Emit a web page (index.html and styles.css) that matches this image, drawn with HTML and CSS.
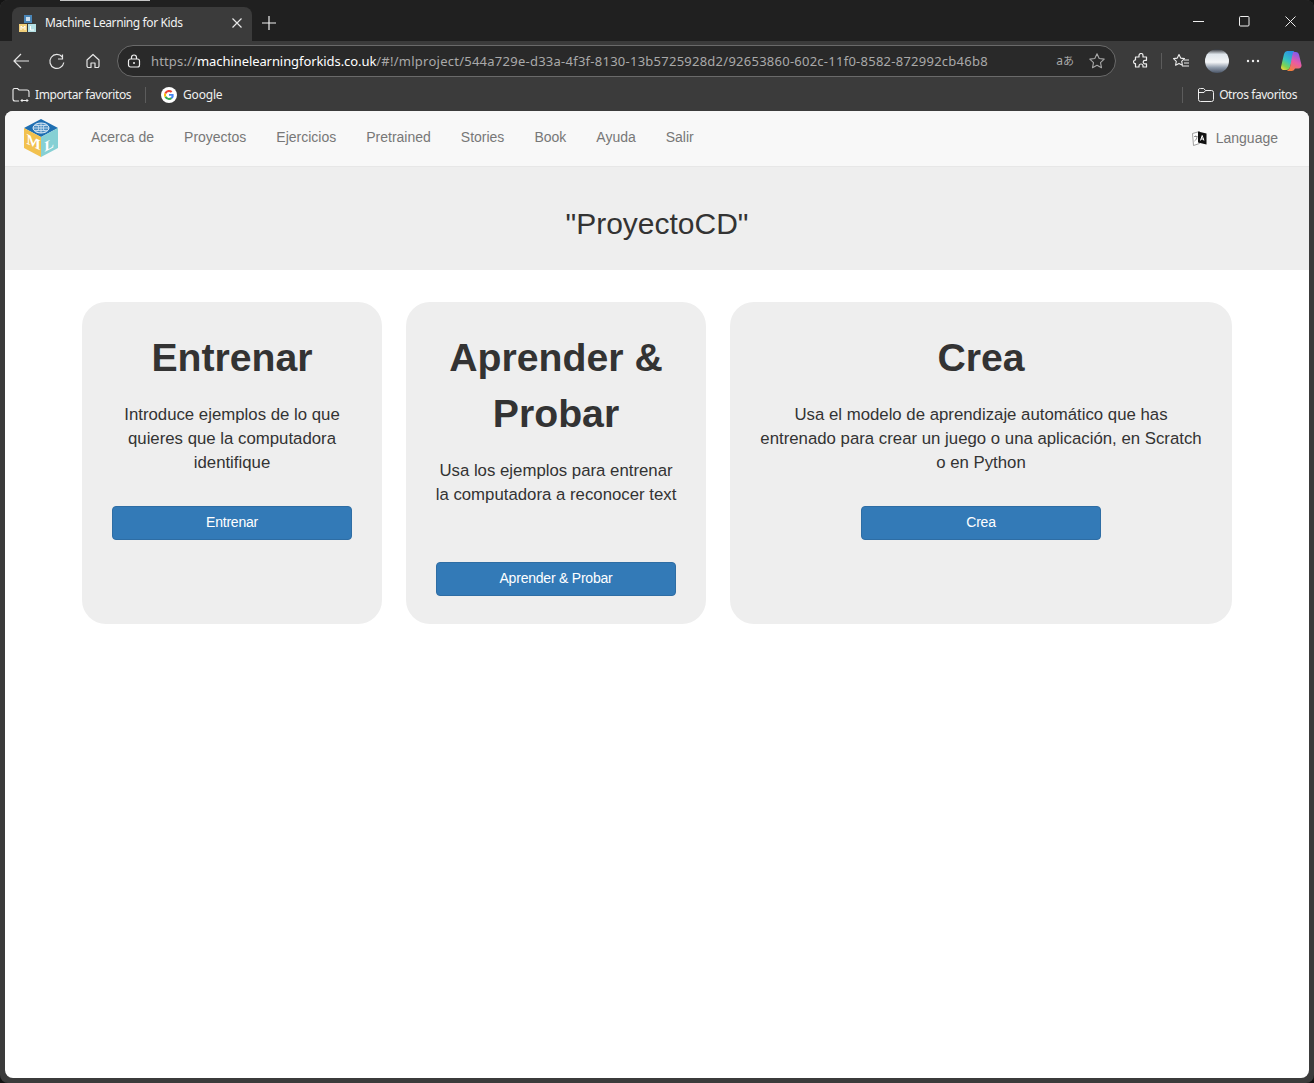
FILE: index.html
```html
<!DOCTYPE html>
<html lang="en">
<head>
    <meta charset="UTF-8">
    <meta name="viewport" content="width=device-width, initial-scale=1.0">
    <title>Machine Learning for Kids</title>
    <link rel="stylesheet" href="styles.css">
</head>
<body>
<div class="window">
    <div class="tabstrip">
        <div class="tab">
            <svg class="favicon" width="17" height="17" viewBox="0 0 17 17">
                <rect x="5" y="0" width="8" height="8" fill="#4a86b8"/>
                <rect x="7" y="2" width="4" height="4" fill="#cfe0ee"/>
                <rect x="0" y="9" width="8" height="8" fill="#f1cf7a"/>
                <rect x="9" y="9" width="8" height="8" fill="#b5e0e4"/>
                <path d="M2 15v-4l2 2.500L6 11v4" fill="none" stroke="#fff" stroke-width="1"/>
                <path d="M11.500 11v4H15" fill="none" stroke="#fff" stroke-width="1"/>
            </svg>
            <span class="tab-title">Machine Learning for Kids</span>
            <svg class="tab-close" width="10" height="10" viewBox="0 0 10 10"><path d="M.5.5l9 9M9.500.5l-9 9" stroke="#e8e8e8" stroke-width="1.200"/></svg>
        </div>
        <svg class="new-tab" width="14" height="14" viewBox="0 0 14 14"><path d="M7 0v14M0 7h14" stroke="#f0f0f0" stroke-width="1.200"/></svg>
        <div class="win-controls">
            <svg width="11" height="11" viewBox="0 0 11 11"><path d="M0 5.500h11" stroke="#eee"/></svg>
            <svg width="11" height="11" viewBox="0 0 11 11"><rect x=".5" y=".5" width="9.500" height="9.500" rx="1" fill="none" stroke="#eee"/></svg>
            <svg width="11" height="11" viewBox="0 0 11 11"><path d="M.5.500l10 10M10.500.5l-10 10" stroke="#eee"/></svg>
        </div>
    </div>

    <div class="toolbar">
        <svg class="tool" width="18" height="18" viewBox="0 0 18 18"><path d="M17 9H2M9 2L2 9l7 7" fill="none" stroke="#e6e6e6" stroke-width="1.200"/></svg>
        <svg class="tool" width="18" height="18" viewBox="0 0 18 18"><path d="M14.500 2.500v4.500H10M15.800 10.500A7 7 0 1 1 14.300 5" fill="none" stroke="#e6e6e6" stroke-width="1.200"/></svg>
        <svg class="tool" width="18" height="18" viewBox="0 0 18 18"><path d="M3 8l6-5.500L15 8v6a1.500 1.500 0 0 1-1.500 1.500H11V11H7v4.500H4.500A1.500 1.500 0 0 1 3 14z" fill="none" stroke="#e6e6e6" stroke-width="1.200" stroke-linejoin="round"/></svg>
        <div class="address">
            <svg class="lock" width="14" height="14" viewBox="0 0 14 14"><rect x="1.500" y="5" width="11" height="8" rx="2" fill="none" stroke="#eee" stroke-width="1.200"/><path d="M4.500 5V3.500a2.500 2.500 0 0 1 5 0V5" fill="none" stroke="#eee" stroke-width="1.200"/><circle cx="7" cy="9" r="1" fill="#eee"/></svg>
            <span class="url"><span class="url-scheme">https://</span><span class="url-host">machinelearningforkids.co.uk</span><span class="url-path">/#!/mlproject/544a729e-d33a-4f3f-8130-13b5725928d2/92653860-602c-11f0-8582-872992cb46b8</span></span>
            <span class="read-aloud">a<span class="read-kana">あ</span></span>
            <svg width="18" height="18" viewBox="0 0 18 18"><path d="M9 1.800l2.200 4.700 5 .6-3.700 3.500 1 5.100L9 13.200l-4.500 2.500 1-5.100L1.800 7.100l5-.6z" fill="none" stroke="#a8a8a8" stroke-width="1.100" stroke-linejoin="round"/></svg>
        </div>
        <svg class="tool-ext" width="16" height="16" viewBox="0 0 16 16"><path d="M6 2.500a2 2 0 0 1 4 0V4h3.500v3.300H12a1.800 1.800 0 0 0 0 3.600h1.500V14H10v-1a2 2 0 0 0-4 0v1H2.500v-3.300H1.800a2 2 0 0 1 0-3.700h.7V4H6z" fill="none" stroke="#eee" stroke-width="1.200" stroke-linejoin="round"/></svg>
        <span class="tool-sep"></span>
        <svg class="tool-fav" width="18" height="18" viewBox="0 0 18 18"><path d="M7 2.500l1.700 3.600 3.800.5-2.800 2.700.7 3.900L7 11.400l-3.400 1.800.7-3.900L1.500 6.600l3.800-.5z" fill="none" stroke="#eee" stroke-width="1.100" stroke-linejoin="round"/><path d="M12 8h5M12 11h5M10 14h7" stroke="#eee"/></svg>
        <span class="profile"></span>
        <svg class="tool-more" width="14" height="4" viewBox="0 0 14 4"><circle cx="2" cy="2" r="1.200" fill="#eee"/><circle cx="7" cy="2" r="1.200" fill="#eee"/><circle cx="12" cy="2" r="1.200" fill="#eee"/></svg>
        <svg class="copilot" width="22" height="22" viewBox="0 0 22 22">
            <defs>
                <linearGradient id="copilotLeft" x1="0.7" y1="0" x2="0.2" y2="1">
                    <stop offset="0" stop-color="#2b8fe6"/>
                    <stop offset="0.5" stop-color="#35c4c0"/>
                    <stop offset="0.8" stop-color="#7fd34e"/>
                    <stop offset="1" stop-color="#e8d23f"/>
                </linearGradient>
                <linearGradient id="copilotRight" x1="0.7" y1="0" x2="0.3" y2="1">
                    <stop offset="0" stop-color="#7a5cf0"/>
                    <stop offset="0.5" stop-color="#e85aa8"/>
                    <stop offset="1" stop-color="#f5803a"/>
                </linearGradient>
            </defs>
            <path d="M7 1h6a2 2 0 0 1 1.500 1L10 17a4 4 0 0 1-4 3H3.500A2.500 2.500 0 0 1 1 17L4 4a4 4 0 0 1 3-3z" fill="url(#copilotLeft)"/>
            <path d="M13 2h3a3 3 0 0 1 3 2.500L21.500 15a3 3 0 0 1-3 3.500H15a4 4 0 0 1-3 2.500H7l1-1a6 6 0 0 0 2-3z" fill="url(#copilotRight)"/>
        </svg>
    </div>

    <div class="bookmarks">
        <div class="bookmark">
            <svg width="18" height="16" viewBox="0 0 18 16"><path d="M7 14H3a2 2 0 0 1-2-2V3a1.500 1.500 0 0 1 1.500-1.500h3L7 3h8a2 2 0 0 1 2 2v5" fill="none" stroke="#eee" stroke-width="1.100"/><path d="M9 13.500h7M9 13.500l1.500-1.500M9 13.500l1.500 1.500M16 13.500L14.500 12M16 13.500l-1.500 1.500" fill="none" stroke="#eee"/></svg>
            <span>Importar favoritos</span>
        </div>
        <span class="bookmark-sep"></span>
        <div class="bookmark bookmark-google">
            <svg width="16" height="16" viewBox="0 0 16 16">
                <circle cx="8" cy="8" r="8" fill="#fff"/>
                <path d="M12.600 6.900H8v1.900h2.700a2.800 2.800 0 0 1-1.100 1.700l1.600 1.300a5 5 0 0 0 1.400-4.900z" fill="#4285f4"/>
                <path d="M8 13c1.300 0 2.400-.4 3.200-1.200L9.600 10.500a3 3 0 0 1-4.400-1.500L3.500 10.300A5 5 0 0 0 8 13z" fill="#34a853"/>
                <path d="M5.200 9a3 3 0 0 1 0-2L3.500 5.700a5 5 0 0 0 0 4.600z" fill="#fbbc05"/>
                <path d="M8 5c.7 0 1.400.3 1.900.7l1.500-1.400A5 5 0 0 0 3.500 5.700L5.200 7A3 3 0 0 1 8 5z" fill="#ea4335"/>
            </svg>
            <span>Google</span>
        </div>
        <span class="bookmark-sep bookmark-sep-right"></span>
        <div class="bookmark">
            <svg width="16" height="14" viewBox="0 0 16 14"><path d="M2.500.5h3.200L7.500 2.500h6a2 2 0 0 1 2 2V11.500a2 2 0 0 1-2 2h-11a2 2 0 0 1-2-2V2a1.500 1.500 0 0 1 1-1.500zM1 4.500h5l1.500-2" fill="none" stroke="#eee" stroke-width="1"/></svg>
            <span>Otros favoritos</span>
        </div>
    </div>

    <div class="page">
        <nav class="navbar">
            <svg class="logo" width="36" height="40" viewBox="0 0 36 40">
                <path d="M18 1L35 10 18 19 1 10z" fill="#1f6fb2"/>
                <path d="M1 10l17 9v20L1 30z" fill="#f2c14e"/>
                <path d="M35 10L18 19v20l17-9z" fill="#86d0d4"/>
                <ellipse cx="18" cy="10" rx="8" ry="5" fill="#4d8fc4" stroke="#e4eff8" stroke-width="1"/>
                <path d="M10 10h16M11.500 7.500h13M11.500 12.500h13M18 5v10M13.500 6c3 2.500 3 5.500 0 8M22.500 6c-3 2.500-3 5.500 0 8" fill="none" stroke="#e4eff8" stroke-width=".7"/>
                <text class="logo-letter" transform="matrix(1 .5 0 1 3.500 25.500)" font-size="15">M</text>
                <text class="logo-letter" transform="matrix(1 -.5 0 1 21.500 33.800)" font-size="14">L</text>
            </svg>
            <ul class="nav-links">
                <li>Acerca de</li>
                <li>Proyectos</li>
                <li>Ejercicios</li>
                <li>Pretrained</li>
                <li>Stories</li>
                <li>Book</li>
                <li>Ayuda</li>
                <li>Salir</li>
            </ul>
            <div class="language">
                <svg width="15" height="16" viewBox="0 0 15 16">
                    <path d="M.5 3.500L7.500 1.500v12l-6 2z" fill="#fff" stroke="#888" stroke-width=".8"/>
                    <path d="M6 1.500l8.500 2v11L6 12.500z" fill="#111"/>
                    <path d="M8.500 10.500l1.700-5 1.700 5M9 9h2.500" fill="none" stroke="#fff"/>
                    <path d="M2 6.500h3.500M3.700 5.500v1M2.500 11c1.500-1 2.500-2.500 2.500-4.500" fill="none" stroke="#777" stroke-width=".8"/>
                </svg>
                <span>Language</span>
            </div>
        </nav>

        <div class="project-title">"ProyectoCD"</div>

        <div class="cards">
            <section class="card card-narrow">
                <h2>Entrenar</h2>
                <p>Introduce ejemplos de lo que quieres que la computadora identifique</p>
                <button>Entrenar</button>
            </section>
            <section class="card card-narrow">
                <h2>Aprender &amp; Probar</h2>
                <p>Usa los ejemplos para entrenar la computadora a reconocer text</p>
                <button>Aprender &amp; Probar</button>
            </section>
            <section class="card card-wide">
                <h2>Crea</h2>
                <p>Usa el modelo de aprendizaje automático que has entrenado para crear un juego o una aplicación, en Scratch o en Python</p>
                <button>Crea</button>
            </section>
        </div>
    </div>
</div>
</body>
</html>
```

FILE: styles.css
```css
html, body {
    margin: 0;
    padding: 0;
    height: 100%;
    background-color: #141414;
    overflow: hidden;
}
svg {
    display: block;
    flex: none;
}
.window {
    height: 1083px;
    display: flex;
    flex-direction: column;
    background-color: #3b3b3b;
    border-radius: 8px;
    overflow: hidden;
    font-family: 'Noto Sans', 'Open Sans', sans-serif;
    color: #eee;
}

/* tab strip */
.tabstrip {
    height: 41px;
    background: linear-gradient(#c4c4c4, #c4c4c4) no-repeat 60px 0 / 90px 1px #202020;
    display: flex;
    align-items: flex-end;
    padding-left: 12px;
    box-sizing: border-box;
}
.tab {
    width: 240px;
    height: 34px;
    box-sizing: border-box;
    padding: 0 10px 2px 7px;
    background-color: #3b3b3b;
    border-radius: 8px 8px 0 0;
    display: flex;
    align-items: center;
}
.tab-title {
    margin: 0 0 2px 9px;
    font-size: 12px;
    letter-spacing: -0.4px;
    flex: 1;
    color: #f2f2f2;
}
.new-tab {
    margin: 0 0 11px 10px;
}
.win-controls {
    margin-left: auto;
    display: flex;
    gap: 35px;
    padding: 0 18px 14px 0;
}

/* toolbar */
.toolbar {
    height: 41px;
    display: flex;
    align-items: center;
    padding: 0 0 2px 12px;
    box-sizing: border-box;
}
.tool {
    margin-right: 18px;
}
.address {
    width: 999px;
    height: 32px;
    box-sizing: border-box;
    margin-left: -3px;
    padding: 0 9px 0 9px;
    background-color: #292929;
    border: 1px solid #6a6a6a;
    border-radius: 16px;
    display: flex;
    align-items: center;
}
.url {
    margin-left: 10px;
    flex: 1;
    font-size: 13px;
    white-space: nowrap;
}
.url-scheme {
    color: #a9a9a9;
    letter-spacing: 0.15px;
}
.url-host {
    color: #fff;
    letter-spacing: -0.08px;
}
.url-path {
    color: #a9a9a9;
    letter-spacing: 0.25px;
}
.read-aloud {
    font-size: 12px;
    color: #a8a8a8;
    margin-right: 14px;
}
.read-kana {
    font-family: 'Noto Sans CJK JP', sans-serif;
    font-size: 11px;
}
.tool-ext {
    margin-left: 17px;
}
.tool-sep {
    width: 1px;
    height: 16px;
    background-color: #5c5c5c;
    margin: 0 10px 0 12px;
}
.profile {
    width: 24px;
    height: 24px;
    border-radius: 50%;
    margin-left: 15px;
    background: linear-gradient(#2a2d33 0, #dfe6ec 22%, #f3f5f7 55%, #8c98a8 78%, #4a5566 100%);
}
.tool-more {
    margin-left: 17px;
}
.copilot {
    margin-left: 20px;
}

/* bookmarks */
.bookmarks {
    height: 29px;
    display: flex;
    align-items: center;
    padding: 0 17px 4px 12px;
    box-sizing: border-box;
    font-size: 12px;
    letter-spacing: -0.42px;
    color: #f0f0f0;
}
.bookmark {
    display: flex;
    align-items: center;
    gap: 5px;
}
.bookmark-google {
    gap: 6px;
    letter-spacing: -0.2px;
}
.bookmark-sep {
    width: 1px;
    height: 16px;
    background-color: #5c5c5c;
    margin: 0 15px 0 14px;
}
.bookmark-sep-right {
    margin: 0 15px 0 auto;
}

/* page */
.page {
    height: 967px;
    margin: 0 5px;
    background-color: #fff;
    border-radius: 8px;
    overflow: hidden;
    font-family: 'Liberation Sans', Arial, sans-serif;
    color: #333;
}
.navbar {
    height: 56px;
    box-sizing: border-box;
    background-color: #f8f8f8;
    border-bottom: 1px solid #e7e7e7;
    display: flex;
    align-items: center;
    padding: 0 31px 0 18px;
}
.logo {
    margin-top: -2px;
}
.logo-letter {
    font-family: 'Liberation Serif', serif;
    font-weight: bold;
    fill: #fff;
}
.nav-links {
    list-style: none;
    margin: 0 0 4px 32px;
    padding: 0;
    display: flex;
    gap: 30px;
    font-size: 14px;
    color: #777;
}
.language {
    margin: 0 0 2px auto;
    display: flex;
    align-items: center;
    gap: 9px;
    font-size: 14px;
    color: #777;
}
.project-title {
    height: 103px;
    background-color: #eee;
    text-align: center;
    font-size: 30px;
    line-height: 113px;
}
.cards {
    display: flex;
    gap: 24px;
    margin: 32px 77px 0;
}
.card {
    box-sizing: border-box;
    background-color: #eee;
    border-radius: 24px;
    padding: 28px 30px 28px;
    text-align: center;
}
.card-narrow {
    width: 300px;
}
.card-wide {
    width: 502px;
}
.card h2 {
    margin: 0 0 17px;
    font-size: 39.2px;
    line-height: 56px;
    font-weight: bold;
}
.card p {
    margin: 0 -3px 31px;
    min-height: 72px;
    font-size: 16.8px;
    line-height: 24px;
}
.card button {
    display: inline-block;
    width: 240px;
    height: 34px;
    padding: 0 0 2px;
    background-color: #337ab7;
    border: 1px solid #2e6da4;
    border-radius: 4px;
    color: #fff;
    font-family: inherit;
    font-size: 14px;
    letter-spacing: -0.22px;
}
```
